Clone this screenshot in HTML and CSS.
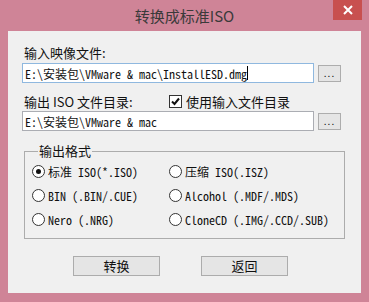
FILE: index.html
```html
<html>
    <head>
        <link rel="stylesheet" href="styles.css">
    </head>
    <body>
        <div id="window">
            <div id="titlebar">
                <span class="title">转换成标准ISO</span>
                <div class="close">
                    <svg width="10" height="10" viewBox="0 0 10 10"><path d="M1 1L9 9M9 1L1 9" stroke="#fff" stroke-width="2"/></svg>
                </div>
            </div>
            <div id="client">
                <div class="label first">输入映像文件:</div>
                <div class="field-row">
                    <div class="field focus"><span class="mono">E:\安装包\VMware &amp; mac\InstallESD.dmg</span><span class="caret"></span></div>
                    <div class="browse">...</div>
                </div>
                <div class="label second">
                    <span class="label-text">输出 ISO 文件目录:</span>
                    <span class="check">
                        <svg width="11" height="11" viewBox="0 0 11 11"><path d="M2 5.5L4.5 8L9 2.5" stroke="#111" stroke-width="2" fill="none"/></svg>
                    </span>
                    <span>使用输入文件目录</span>
                </div>
                <div class="field-row">
                    <div class="field"><span class="mono">E:\安装包\VMware &amp; mac</span></div>
                    <div class="browse">...</div>
                </div>
                <fieldset class="group">
                    <legend>输出格式</legend>
                    <div class="radios">
                        <div class="radio"><span class="dot on"></span><span class="mono">标准 ISO(*.ISO)</span></div>
                        <div class="radio"><span class="dot"></span><span class="mono">压缩 ISO(.ISZ)</span></div>
                        <div class="radio"><span class="dot"></span><span class="mono">BIN (.BIN/.CUE)</span></div>
                        <div class="radio"><span class="dot"></span><span class="mono">Alcohol (.MDF/.MDS)</span></div>
                        <div class="radio"><span class="dot"></span><span class="mono">Nero (.NRG)</span></div>
                        <div class="radio"><span class="dot"></span><span class="mono">CloneCD (.IMG/.CCD/.SUB)</span></div>
                    </div>
                </fieldset>
                <div class="buttons">
                    <div class="btn">转换</div>
                    <div class="btn">返回</div>
                </div>
            </div>
        </div>
    </body>
</html>
```

FILE: styles.css
```css
body{
    margin: 0;
    font-family: "Noto Sans CJK SC", "Noto Sans", sans-serif;
    color: #111;
}
#window{
    width: 369px;
    height: 302px;
    box-sizing: border-box;
    background-color: #cf8497;
    padding: 0 8px 9px 8px;
    position: relative;
}
#titlebar{
    height: 31px;
    display: flex;
    align-items: center;
    justify-content: center;
}
.title{
    font-size: 15px;
    color: #3a3a3a;
    margin-top: -1px;
}
.close{
    position: absolute;
    top: 0;
    right: 7px;
    width: 29px;
    height: 20px;
    background-color: #c8504f;
    display: flex;
    align-items: center;
    justify-content: center;
}
#client{
    height: 262px;
    background-color: #f0f0f0;
    padding: 12px 0 0 14px;
    box-sizing: border-box;
    font-size: 13px;
}
.label{
    height: 20px;
    line-height: 20px;
    padding-left: 2px;
}
.label.second{
    margin-top: 9px;
    height: 19px;
    display: flex;
    align-items: center;
}
.label-text{
    width: 145px;
}
.check{
    width: 11px;
    height: 11px;
    border: solid 1px #333;
    background-color: #fff;
    margin-right: 4px;
}
.check svg{
    display: block;
}
.field-row{
    display: flex;
    align-items: center;
}
.field{
    width: 292px;
    height: 20px;
    box-sizing: border-box;
    border: solid 1px #abadb3;
    background-color: #fff;
    padding-left: 2px;
    display: flex;
    align-items: center;
}
.field.focus{
    border-color: #8fb8df;
}
.mono{
    font-family: "Noto Sans Mono CJK SC", "Liberation Mono", monospace;
    font-size: 12px;
    white-space: pre;
}
.caret{
    width: 1px;
    height: 14px;
    background-color: #000;
}
.browse{
    width: 23px;
    height: 17px;
    box-sizing: border-box;
    margin-left: 4px;
    border: solid 1px #adadad;
    background-color: #e5e5e5;
    font-size: 10px;
    line-height: 13px;
    text-align: center;
    letter-spacing: 1px;
}
.group{
    margin: 12px 0 0 2px;
    width: 321px;
    height: 96px;
    box-sizing: border-box;
    border: solid 1px #acacac;
    padding: 0 0 6px 7px;
}
.group legend{
    padding: 0 1px;
    margin-left: 6px;
    line-height: 16px;
}
.radios{
    display: grid;
    grid-template-columns: 137px 1fr;
    grid-auto-rows: 24px;
}
.radio{
    display: flex;
    align-items: center;
}
.dot{
    width: 11px;
    height: 11px;
    border: solid 1px #333;
    border-radius: 50%;
    background-color: #fff;
    margin-right: 3px;
    display: flex;
    align-items: center;
    justify-content: center;
}
.dot.on::after{
    content: "";
    width: 5px;
    height: 5px;
    border-radius: 50%;
    background-color: #111;
}
.buttons{
    display: flex;
    gap: 41px;
    margin-top: 17px;
    padding-left: 51px;
}
.btn{
    width: 87px;
    height: 20px;
    box-sizing: border-box;
    border: solid 1px #acacac;
    background-color: #e5e5e5;
    text-align: center;
    line-height: 18px;
    font-size: 13px;
}
```
